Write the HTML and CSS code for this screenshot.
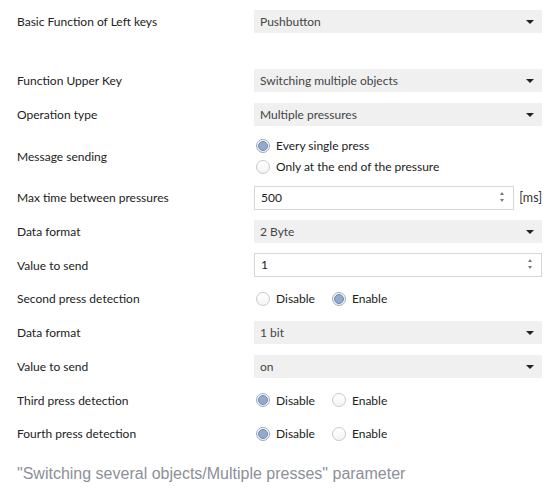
FILE: index.html
```html
<!DOCTYPE html>
<html lang="en">
<head>
    <meta charset="UTF-8">
    <meta name="viewport" content="width=device-width, initial-scale=1.0">
    <title>Switching several objects / Multiple presses</title>
    <link rel="stylesheet" href="styles.css">
</head>
<body>
    <div class="params">
        <div class="row first">
            <div class="label">Basic Function of Left keys</div>
            <div class="select">Pushbutton<span class="caret"></span></div>
        </div>
        <div class="row spaced">
            <div class="label">Function Upper Key</div>
            <div class="select">Switching multiple objects<span class="caret"></span></div>
        </div>
        <div class="row">
            <div class="label">Operation type</div>
            <div class="select">Multiple pressures<span class="caret"></span></div>
        </div>
        <div class="row tall">
            <div class="label">Message sending</div>
            <div class="radios stack">
                <label class="radio"><span class="dot on"></span>Every single press</label>
                <label class="radio"><span class="dot"></span>Only at the end of the pressure</label>
            </div>
        </div>
        <div class="row">
            <div class="label">Max time between pressures</div>
            <div class="with-unit">
                <div class="spin">500<span class="arrows"><i class="up"></i><i class="down"></i></span></div>
                <span class="unit">[ms]</span>
            </div>
        </div>
        <div class="row">
            <div class="label">Data format</div>
            <div class="select">2 Byte<span class="caret"></span></div>
        </div>
        <div class="row">
            <div class="label">Value to send</div>
            <div class="spin">1<span class="arrows"><i class="up"></i><i class="down"></i></span></div>
        </div>
        <div class="row">
            <div class="label">Second press detection</div>
            <div class="radios">
                <label class="radio"><span class="dot"></span>Disable</label>
                <label class="radio"><span class="dot on"></span>Enable</label>
            </div>
        </div>
        <div class="row">
            <div class="label">Data format</div>
            <div class="select">1 bit<span class="caret"></span></div>
        </div>
        <div class="row">
            <div class="label">Value to send</div>
            <div class="select">on<span class="caret"></span></div>
        </div>
        <div class="row">
            <div class="label">Third press detection</div>
            <div class="radios">
                <label class="radio"><span class="dot on"></span>Disable</label>
                <label class="radio"><span class="dot"></span>Enable</label>
            </div>
        </div>
        <div class="row">
            <div class="label">Fourth press detection</div>
            <div class="radios">
                <label class="radio"><span class="dot on"></span>Disable</label>
                <label class="radio"><span class="dot"></span>Enable</label>
            </div>
        </div>
    </div>
    <p class="caption">"Switching several objects/Multiple presses" parameter</p>
</body>
</html>
```

FILE: styles.css
```css
*{margin:0;padding:0;box-sizing:border-box}
body{background:#fff;color:#222;font-family:'Lato','Noto Sans',sans-serif;font-size:12px}
.params{padding:5px 15px 0 17px}
.row{display:grid;grid-template-columns:237px 288px;align-items:center;height:33.7px}
.row.spaced{margin-top:25px}
.row.tall{height:50px}
.label{color:#222}
.select{position:relative;height:23px;line-height:23px;padding-left:6px;background:#f0f0f0;color:#444}
.caret{position:absolute;right:8px;top:10px;border-left:4px solid transparent;border-right:4px solid transparent;border-top:4px solid #222}
.with-unit{display:flex;align-items:center;gap:5px}
.with-unit .spin{width:261px}
.unit{color:#333;font-size:12.5px}
.spin{position:relative;height:24px;line-height:22px;padding-left:6px;background:#fff;border:1px solid #d6d6d6;color:#222}
.arrows{position:absolute;right:9px;top:5px;display:flex;flex-direction:column;gap:4px}
.arrows i{display:block;border-left:2.5px solid transparent;border-right:2.5px solid transparent}
.arrows .up{border-bottom:3px solid #777}
.arrows .down{border-top:3px solid #777}
.radios{display:flex;align-items:center;gap:17px;padding-left:2px}
.radios.stack{flex-direction:column;align-items:flex-start;gap:6px}
.radio{display:flex;align-items:center;gap:6px;color:#222}
.dot{width:14px;height:14px;border-radius:50%;border:1px solid #c9c9c9;background:linear-gradient(#fff,#f4f4f4);display:flex;align-items:center;justify-content:center}
.dot.on{border-color:#9aaac0}
.dot.on::after{content:'';width:8px;height:8px;border-radius:50%;background:#92aacb;border:1px solid #6d88ae}
.caption{margin:14px 0 0 17px;font-family:'Liberation Sans',Arial,sans-serif;font-size:16px;color:#8b9099}
```
